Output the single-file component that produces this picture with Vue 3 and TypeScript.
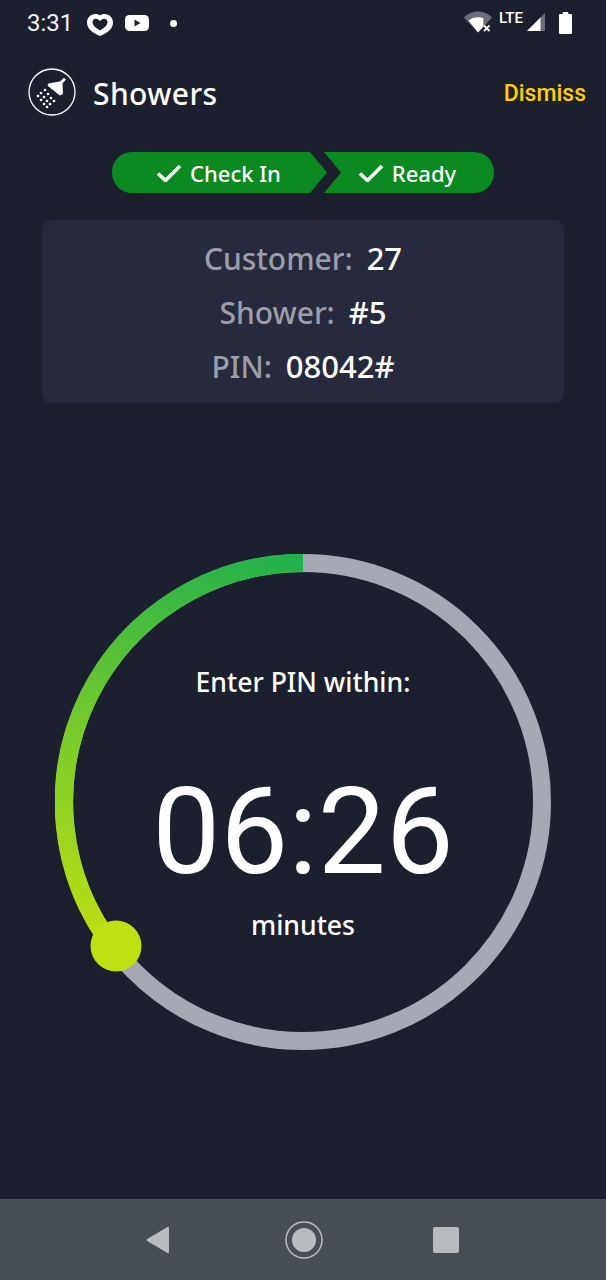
<script setup lang="ts">
const rows = [
  { label: 'Customer:', value: '27' },
  { label: 'Shower:', value: '#5' },
  { label: 'PIN:', value: '08042#' },
];

const cx = 248;
const cy = 248;
const r = 239;
const knob = { x: 61, y: 392 };
// the green part runs counter-clockwise from the top, ends hidden under the knob
const progressPath = `M ${cx} ${cy - r} A ${r} ${r} 0 0 0 58.6 393.8`;

const drops: [number, number][] = [
  [17, 22], [20, 26], [23, 30], [26, 33],
  [13, 25], [16, 29], [19, 33], [22, 36],
  [10, 28], [13, 32], [16, 36], [19, 39],
];
</script>

<template>
  <div class="screen">
    <div class="status-bar">
      <span class="clock">3:31</span>
      <svg class="st-heart" viewBox="0 0 26 22">
        <path d="M13 22C7 19.500 0 15.500 0 8.500 0 3.500 4 0 8.500 0c1.800 0 3.300.5 4.500 1.500C14.200.5 15.700 0 17.500 0 22 0 26 3.500 26 8.500 26 15.500 19 19.500 13 22z" fill="#fff" />
        <path d="M13 16.500C10 14.500 5.500 12 5.500 8.300 5.500 6.200 7 4.800 8.800 4.800c1.700 0 3.200 1 4.200 2.500 1-1.500 2.500-2.500 4.200-2.500 1.800 0 3.300 1.400 3.300 3.500C20.500 12 16 14.500 13 16.500z" fill="#1c202e" />
      </svg>
      <svg class="st-yt" viewBox="0 0 24 16">
        <rect width="24" height="16" rx="4.500" fill="#fff" />
        <path d="M9.500 4.500v7l6-3.500z" fill="#1c202e" />
      </svg>
      <span class="st-dot"></span>
      <span class="status-spacer"></span>
      <svg class="st-wifi" viewBox="0 0 28 22">
        <path d="M0 6.500C3.500 2.800 8.500.5 14 .5s10.500 2.300 14 6L14 21.500z" fill="#6b6e78" />
        <path d="M4.500 9.500C7 7.400 10.300 6.200 14 6.200c1.900 0 3.700.3 5.300 1v8.600L14 21.500z" fill="#fff" />
        <path d="M20 14.500l5.500 5.500M25.500 14.500L20 20" stroke="#fff" stroke-width="1.800" />
      </svg>
      <span class="st-lte">LTE</span>
      <svg class="st-signal" viewBox="0 0 18 18">
        <path d="M18 0v18H0z" fill="#6b6e78" />
        <path d="M13.500 4.500V18H0z" fill="#fff" />
      </svg>
      <svg class="st-battery" viewBox="0 0 12 22" preserveAspectRatio="none">
        <path d="M3.500 0h5v2H11a1 1 0 0 1 1 1v18a1 1 0 0 1-1 1H1a1 1 0 0 1-1-1V3a1 1 0 0 1 1-1h2.500z" fill="#fff" />
      </svg>
    </div>

    <header class="app-header">
      <svg class="logo" viewBox="0 0 48 48">
        <circle cx="24" cy="24" r="23" fill="none" stroke="#fff" stroke-width="1.300" />
        <path d="M32 13.500l4-3.700 2 1.800-3.500 3.800 .5 8.500c.2 2.600-2.100 4.200-4 2.800L20.500 18.500c-1.500-1.200-1-3 1-3.300z" fill="#fff" />
        <circle v-for="(d, i) in drops" :key="i" :cx="d[0]" :cy="d[1]" r="1.300" fill="#fff" />
      </svg>
      <h1 class="title">Showers</h1>
      <span class="dismiss">Dismiss</span>
    </header>

    <div class="steps">
      <div class="step step-first">
        <svg class="check" viewBox="0 0 26 18"><path d="M2 9.500l7.500 7L24 2" fill="none" stroke="#fff" stroke-width="3.600" /></svg>
        <span>Check In</span>
      </div>
      <div class="step step-last">
        <svg class="check" viewBox="0 0 26 18"><path d="M2 9.500l7.500 7L24 2" fill="none" stroke="#fff" stroke-width="3.600" /></svg>
        <span>Ready</span>
      </div>
    </div>

    <section class="info-card">
      <div v-for="row in rows" :key="row.label" class="info-row">
        <span class="info-label">{{ row.label }}</span>
        <span class="info-value">{{ row.value }}</span>
      </div>
    </section>

    <div class="timer">
      <svg class="ring" viewBox="0 0 496 496">
        <defs>
          <linearGradient id="arcGrad" gradientUnits="userSpaceOnUse" x1="248" y1="0" x2="160" y2="420">
            <stop offset="0" stop-color="#1fb14c" />
            <stop offset="0.5" stop-color="#76ca2c" />
            <stop offset="1" stop-color="#bfe012" />
          </linearGradient>
        </defs>
        <circle :cx="cx" :cy="cy" :r="r" fill="none" stroke="#a6a9b4" stroke-width="18" />
        <path :d="progressPath" fill="none" stroke="url(#arcGrad)" stroke-width="18.500" />
        <circle :cx="knob.x" :cy="knob.y" r="25.500" fill="#bfe012" />
      </svg>
      <div class="timer-text">
        <p class="timer-top">Enter PIN within:</p>
        <p class="timer-count">06:26</p>
        <p class="timer-unit">minutes</p>
      </div>
    </div>

    <nav class="nav-bar">
      <svg class="nav-back" viewBox="0 0 24 28"><path d="M1.500 12.700L21.500 1c.8-.4 1.500 0 1.500.9v24.200c0 .9-.7 1.300-1.500.9L1.500 15.300c-1-.6-1-2 0-2.600z" fill="#b9bcbe" /></svg>
      <svg class="nav-home" viewBox="0 0 38 38">
        <circle cx="19" cy="19" r="18" fill="none" stroke="#b9bcbe" stroke-width="1.500" />
        <circle cx="19" cy="19" r="12" fill="#b9bcbe" />
      </svg>
      <span class="nav-recent"></span>
    </nav>
  </div>
</template>

<style>
html,
body {
  margin: 0;
  background: #1c202e;
}
</style>

<style scoped>
.screen {
  width: 606px;
  height: 1280px;
  display: flex;
  flex-direction: column;
  background: #1c202e;
  color: #fff;
  font-family: "Noto Sans", Lato, sans-serif;
  overflow: hidden;
}

.status-bar {
  height: 46px;
  flex-shrink: 0;
  display: flex;
  align-items: center;
  padding: 0 34px 0 27px;
  font-family: Roboto, sans-serif;
}

.clock {
  font-size: 24px;
  width: 60px;
  color: #f2f2f4;
}

.st-heart {
  width: 26px;
  height: 22px;
  margin: 3px 12px 0 0;
}

.st-yt {
  width: 24px;
  height: 16px;
}

.st-dot {
  width: 7px;
  height: 7px;
  border-radius: 50%;
  background: #fff;
  margin-left: 21px;
}

.status-spacer {
  flex: 1;
}

.st-wifi {
  width: 28px;
  height: 22px;
  margin-bottom: 2px;
}

.st-lte {
  font-size: 15px;
  font-weight: 500;
  margin: -11px 0 0 7px;
  width: 28px;
}

.st-signal {
  width: 18px;
  height: 18px;
  margin-bottom: 2px;
}

.st-battery {
  width: 13px;
  height: 22px;
  margin-left: 14px;
}

.app-header {
  height: 62px;
  flex-shrink: 0;
  margin-top: 15px;
  display: flex;
  align-items: center;
  padding: 0 20px 0 28px;
}

.logo {
  width: 48px;
  height: 48px;
  margin-right: 17px;
}

.title {
  flex: 1;
  margin: 2px 0 0;
  font-size: 30px;
  font-weight: 500;
  letter-spacing: 0.4px;
}

.dismiss {
  font-family: Roboto, sans-serif;
  font-size: 23px;
  font-weight: 500;
  color: #fdcc0a;
  margin-top: 3px;
}

.steps {
  display: flex;
  justify-content: center;
  margin-top: 29px;
}

.step {
  height: 41px;
  display: flex;
  align-items: center;
  justify-content: center;
  gap: 8px;
  background: #0a8a20;
  font-size: 22px;
  font-weight: 500;
}

.step-first {
  width: 215px;
  padding-right: 2px;
  box-sizing: border-box;
  border-radius: 20px 0 0 20px;
  clip-path: polygon(0 0, calc(100% - 17px) 0, 100% 50%, calc(100% - 17px) 100%, 0 100%);
}

.step-last {
  width: 170px;
  margin-left: -3px;
  padding-right: 4px;
  box-sizing: border-box;
  border-radius: 0 20px 20px 0;
  clip-path: polygon(0 0, 100% 0, 100% 100%, 0 100%, 17px 50%);
}

.check {
  width: 26px;
  height: 18px;
}

.info-card {
  margin: 27px 42px 0;
  height: 183px;
  padding-top: 1px;
  box-sizing: border-box;
  display: flex;
  flex-direction: column;
  justify-content: center;
  background: #272a3c;
  border-radius: 9px;
}

.info-row {
  height: 54px;
  display: flex;
  align-items: center;
  justify-content: center;
  gap: 14px;
  font-size: 30px;
  font-weight: 500;
}

.info-label {
  color: #9b9ea9;
}

.info-value {
  color: #fff;
  font-size: 31px;
}

.timer {
  position: relative;
  width: 496px;
  height: 496px;
  margin: 151px auto 0;
  flex-shrink: 0;
}

.ring {
  position: absolute;
  inset: 0;
  width: 496px;
  height: 496px;
}

.timer-text {
  position: relative;
  padding-top: 111px;
  text-align: center;
}

.timer-top {
  margin: 0;
  font-size: 26.600px;
  font-weight: 500;
  line-height: 34px;
}

.timer-count {
  margin: 73px 0 0;
  font-family: Roboto, sans-serif;
  font-size: 121px;
  line-height: 120px;
}

.timer-unit {
  margin: 16px 0 0;
  font-size: 26.600px;
  font-weight: 500;
  line-height: 34px;
}

.nav-bar {
  margin-top: auto;
  height: 81px;
  flex-shrink: 0;
  padding-right: 2px;
  display: flex;
  align-items: center;
  justify-content: center;
  background: #474f55;
}

.nav-back {
  width: 24px;
  height: 28px;
}

.nav-home {
  width: 38px;
  height: 38px;
  margin: 0 110px 0 115px;
}

.nav-recent {
  width: 26px;
  height: 26px;
  border-radius: 2px;
  background: #b9bcbe;
}
</style>
